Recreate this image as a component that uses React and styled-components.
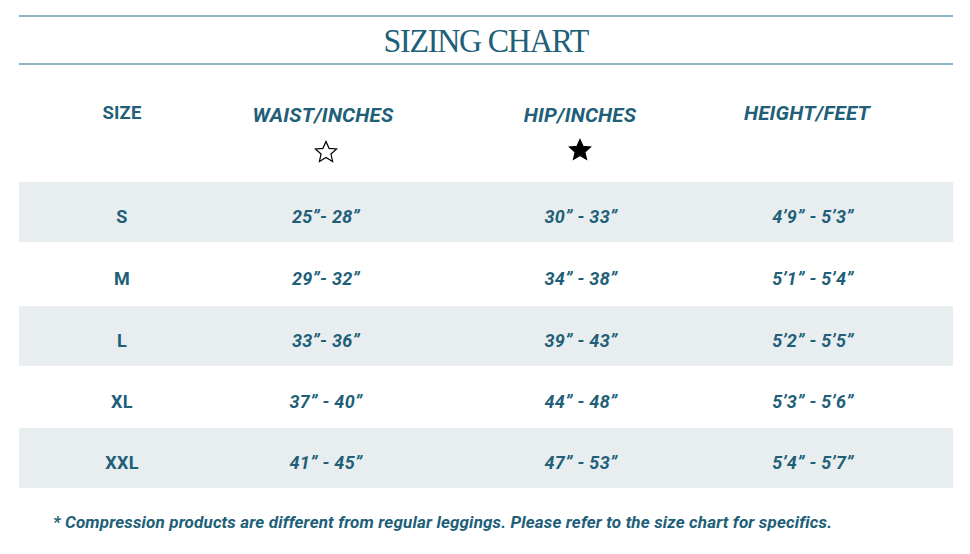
import styled, { createGlobalStyle } from "styled-components";

const GlobalStyle = createGlobalStyle`
    body {
        margin: 0;
        background: #ffffff;
        font-family: "Roboto", "Liberation Sans", sans-serif;
    }
`

const colors = {
    text: "#215f79",
    rule: "#8db4c4",
    band: "#e8eeef",
}

const Page = styled.main`
    width: 934px;
    padding: 15px 0 0 19px;
`

const TitleBar = styled.header`
    border-top: 2px solid ${colors.rule};
    border-bottom: 2px solid ${colors.rule};
    height: 46px;
    display: flex;
    align-items: center;
    justify-content: center;
`

const Title = styled.h1`
    margin: 0;
    font-family: "Liberation Serif", "DejaVu Serif", serif;
    font-weight: 400;
    font-size: 34px;
    letter-spacing: -1.3px;
    color: ${colors.text};
    transform: scaleX(0.94);
    padding-top: 1px;
`

const Table = styled.section`
    display: flex;
    flex-direction: column;
`

const Row = styled.div`
    display: grid;
    grid-template-columns: 206px 202px 308px 156px;
    height: ${({ $height }) => $height}px;
    background: ${({ $shaded }) => ($shaded ? colors.band : "transparent")};
    align-items: center;
    padding-top: ${({ $offset }) => $offset || 0}px;
    box-sizing: border-box;
`

const HeadCell = styled.div`
    align-self: start;
    padding-top: ${({ $top }) => $top}px;
    padding-right: ${({ $shift }) => $shift || 0}px;
    display: flex;
    flex-direction: column;
    align-items: center;
    gap: 12px;
    font-weight: 700;
    font-style: ${({ $italic }) => ($italic ? "italic" : "normal")};
    font-size: ${({ $italic }) => ($italic ? 20.5 : 18.5)}px;
    letter-spacing: 0.2px;
    color: ${colors.text};
`

const StarWrap = styled.span`
    display: flex;
    margin-left: ${({ $nudge }) => $nudge || 0}px;
    margin-top: ${({ $drop }) => $drop || 0}px;
`

const Cell = styled.div`
    text-align: center;
    font-weight: 700;
    font-style: ${({ $italic }) => ($italic ? "italic" : "normal")};
    font-size: 18px;
    letter-spacing: 0.3px;
    color: ${colors.text};
`

const Note = styled.p`
    margin: 24px 0 0 34px;
    font-weight: 700;
    font-style: italic;
    font-size: 17px;
    letter-spacing: 0.15px;
    color: ${colors.text};
`

const Star = ({ filled }) => (
    <svg width="26" height="26" viewBox="0 0 24 24">
        <path
            d="M12 2.2l2.85 6.4 6.95.65-5.25 4.6 1.55 6.85L12 17.1l-6.1 3.6 1.55-6.85-5.25-4.6 6.95-.65z"
            fill={filled ? "#000" : "none"}
            stroke="#000"
            strokeWidth={filled ? 1 : 1.1}
            strokeLinejoin="miter"
        />
    </svg>
)

const sizes = [
    ["S", "25\u201d- 28\u201d", "30\u201d - 33\u201d", "4\u20199\u201d - 5\u20193\u201d"],
    ["M", "29\u201d- 32\u201d", "34\u201d - 38\u201d", "5\u20191\u201d - 5\u20194\u201d"],
    ["L", "33\u201d- 36\u201d", "39\u201d - 43\u201d", "5\u20192\u201d - 5\u20195\u201d"],
    ["XL", "37\u201d - 40\u201d", "44\u201d - 48\u201d", "5\u20193\u201d - 5\u20196\u201d"],
    ["XXL", "41\u201d - 45\u201d", "47\u201d - 53\u201d", "5\u20194\u201d - 5\u20197\u201d"],
]

const rowHeights = [60, 64, 60, 62, 60]

const App = () => {
    return (
        <Page>
            <GlobalStyle />
            <TitleBar>
                <Title>SIZING CHART</Title>
            </TitleBar>

            <Table>
                <Row $height={117}>
                    <HeadCell $top={37}>SIZE</HeadCell>
                    <HeadCell $top={38} $italic $shift={6}>
                        WAIST/INCHES
                        <StarWrap $nudge={6}>
                            <Star />
                        </StarWrap>
                    </HeadCell>
                    <HeadCell $top={38} $italic $shift={2}>
                        HIP/INCHES
                        <StarWrap $drop={-2}>
                            <Star filled />
                        </StarWrap>
                    </HeadCell>
                    <HeadCell $top={36} $italic $shift={12}>HEIGHT/FEET</HeadCell>
                </Row>

                {sizes.map(([size, waist, hip, height], i) => (
                    <Row key={size} $height={rowHeights[i]} $shaded={i % 2 === 0} $offset={9}>
                        <Cell>{size}</Cell>
                        <Cell $italic>{waist}</Cell>
                        <Cell $italic>{hip}</Cell>
                        <Cell $italic>{height}</Cell>
                    </Row>
                ))}
            </Table>

            <Note>* Compression products are different from regular leggings. Please refer to the size chart for specifics.</Note>
        </Page>
    )
}

export default App
